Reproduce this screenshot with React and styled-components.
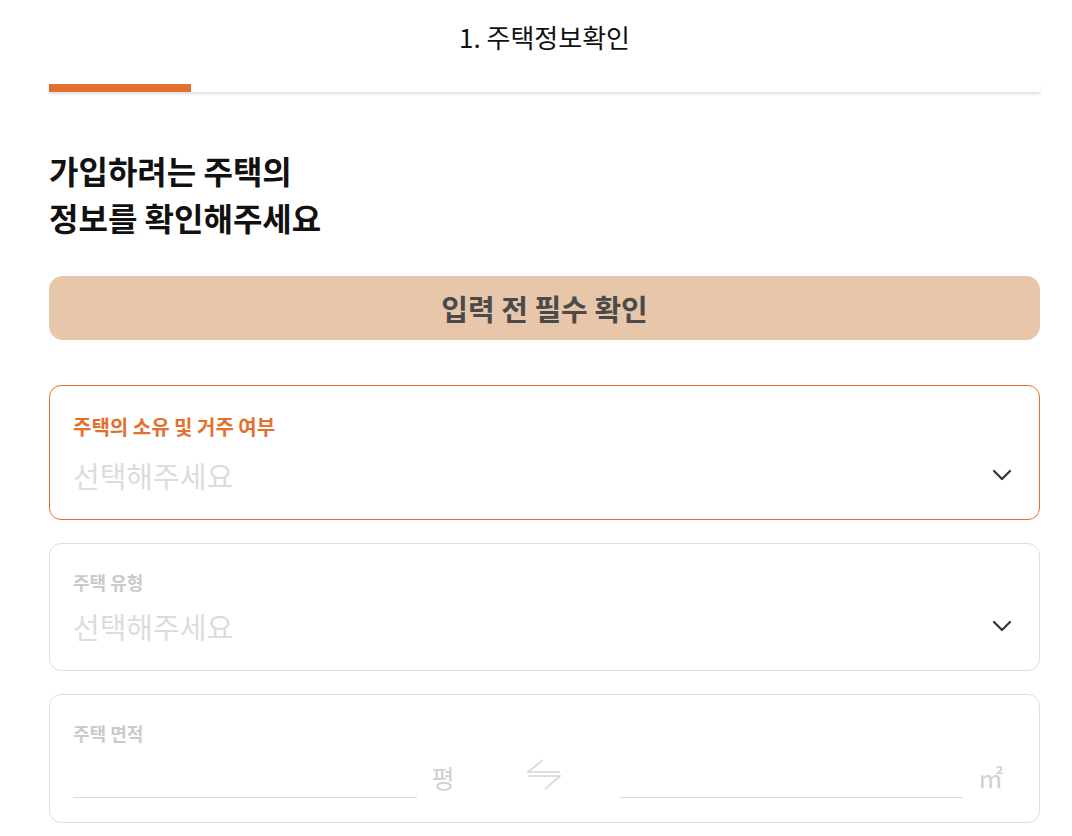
import React from 'react';
import styled, { createGlobalStyle } from 'styled-components';

const GlobalStyle = createGlobalStyle`
  * { box-sizing: border-box; }
  body {
    margin: 0;
    background: #fff;
    font-family: 'Noto Sans CJK KR', 'Noto Sans', sans-serif;
    color: #111;
  }
`;

const Pagina = styled.div`
  padding: 0 32px 14px 49px;
`;

const Topo = styled.header`
  height: 84px;
  padding-bottom: 12px;
  display: flex;
  align-items: center;
  justify-content: center;
  font-size: 26px;
  font-weight: 400;
  color: #111;
`;

const Trilha = styled.div`
  height: 8px;
  background: #fff;
  box-shadow: 0 2px 3px rgba(0, 0, 0, 0.14);
`;

const Preenchido = styled.div`
  height: 100%;
  background: #e2712f;
`;

const Titulo = styled.h1`
  margin: 55px 0 0;
  font-size: 32px;
  font-weight: 700;
  line-height: 47px;
  color: #111;
`;

const Botao = styled.button`
  margin-top: 35px;
  width: 100%;
  height: 64px;
  border: none;
  border-radius: 14px;
  background: #e8c6aa;
  color: #4a4a4a;
  font-family: inherit;
  font-size: 29px;
  font-weight: 700;
  cursor: pointer;
`;

const Cartao = styled.div`
  margin-top: ${({ $ativo }) => ($ativo ? '45px' : '23px')};
  border: 1px solid ${({ $ativo }) => ($ativo ? '#e2712f' : '#dedede')};
  border-radius: 12px;
  padding: ${({ $ativo }) => ($ativo ? '28px 27px 24px 23px' : '26px 27px 24px 23px')};
  display: flex;
  flex-direction: column;
  gap: ${({ $ativo }) => ($ativo ? '15px' : '12px')};
`;

const Rotulo = styled.span`
  font-size: ${({ $ativo }) => ($ativo ? '20px' : '18px')};
  line-height: ${({ $ativo }) => ($ativo ? '26px' : '24px')};
  font-weight: 700;
  color: ${({ $ativo }) => ($ativo ? '#e2712f' : '#cacaca')};
`;

const Linha = styled.div`
  display: flex;
  align-items: center;
  justify-content: space-between;
  height: 40px;
`;

const Placeholder = styled.span`
  font-size: 29px;
  color: #dcdcdc;
`;

const Seta = () => (
  <svg width="20" height="12" viewBox="0 0 20 12" fill="none">
    <path d="M2 2l8 8 8-8" stroke="#333" strokeWidth="2.2" strokeLinecap="round" strokeLinejoin="round" />
  </svg>
);

const LinhaArea = styled.div`
  display: flex;
  align-items: flex-end;
  height: 41px;
  margin-right: -4px;
`;

const Campo = styled.input`
  flex: 1;
  min-width: 0;
  height: 41px;
  border: none;
  border-bottom: 1px solid #dcdcdc;
  outline: none;
  font-family: inherit;
  font-size: 22px;
  background: transparent;
`;

const Unidade = styled.span`
  width: ${({ $largura }) => $largura}px;
  margin-left: 15px;
  margin-bottom: 4px;
  font-size: 25px;
  line-height: 34px;
  color: #d0d0d0;
`;

const Troca = styled.div`
  width: 160px;
  height: 41px;
  display: flex;
  align-items: flex-start;
  justify-content: center;
  padding: 2px 0 0 8px;
`;

const IconeTroca = () => (
  <svg width="34" height="32" viewBox="0 0 34 32" fill="none">
    <path d="M16 1L1 13H33M1 17H33L18 30" stroke="#d4d4d4" strokeWidth="1.6" strokeLinejoin="miter" />
  </svg>
);

const App = () => {
  return (
    <Pagina>
      <GlobalStyle />
      <Topo>1. 주택정보확인</Topo>
      <Trilha>
        <Preenchido style={{ width: `${(1 / 7) * 100}%` }} />
      </Trilha>
      <Titulo>
        가입하려는 주택의
        <br />
        정보를 확인해주세요
      </Titulo>
      <Botao>입력 전 필수 확인</Botao>

      <Cartao $ativo>
        <Rotulo $ativo>주택의 소유 및 거주 여부</Rotulo>
        <Linha>
          <Placeholder>선택해주세요</Placeholder>
          <Seta />
        </Linha>
      </Cartao>

      <Cartao>
        <Rotulo>주택 유형</Rotulo>
        <Linha>
          <Placeholder>선택해주세요</Placeholder>
          <Seta />
        </Linha>
      </Cartao>

      <Cartao>
        <Rotulo>주택 면적</Rotulo>
        <LinhaArea>
          <Campo />
          <Unidade $largura={28}>평</Unidade>
          <Troca>
            <IconeTroca />
          </Troca>
          <Campo />
          <Unidade $largura={38}>㎡</Unidade>
        </LinhaArea>
      </Cartao>
    </Pagina>
  );
};

export default App;
